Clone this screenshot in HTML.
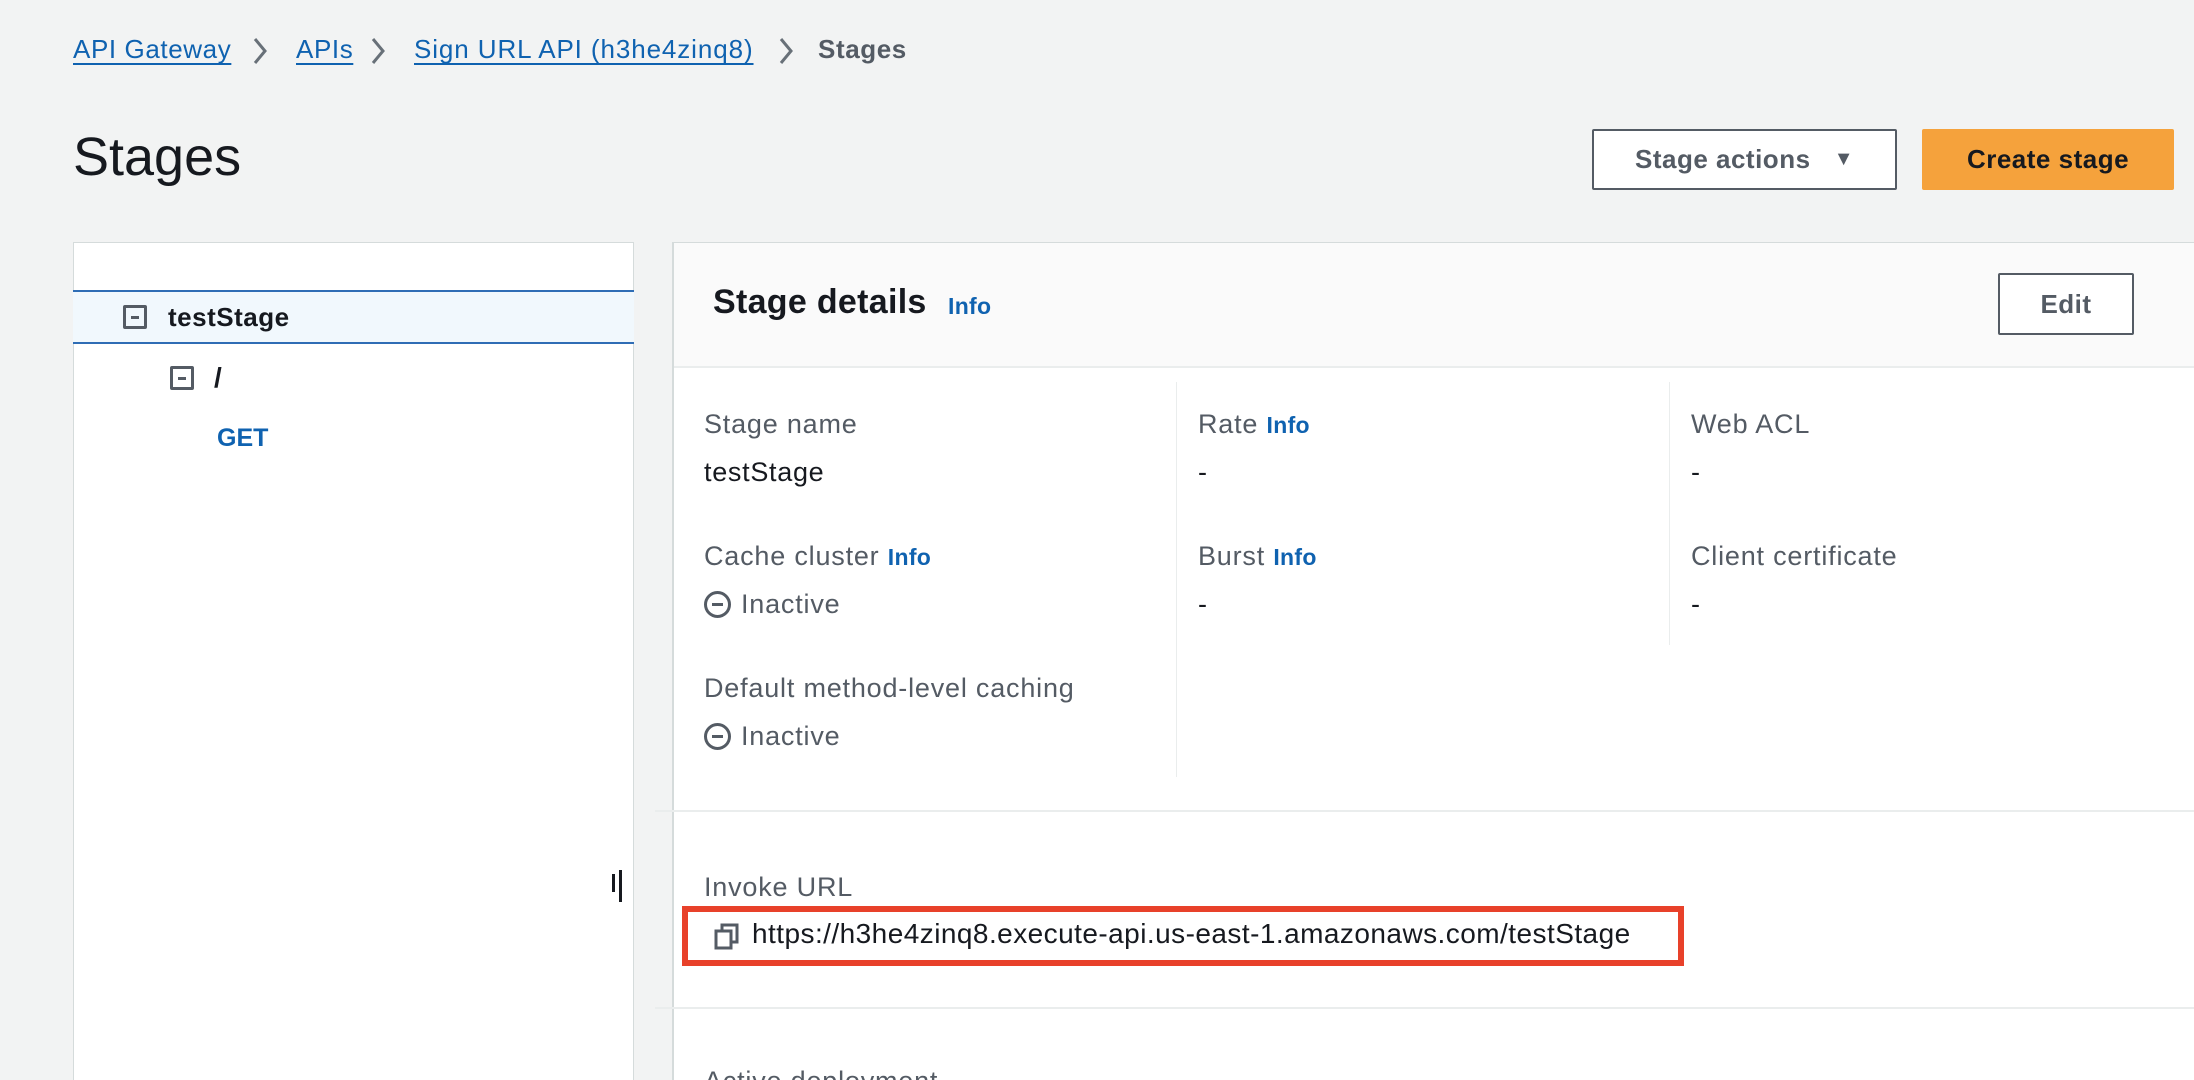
<!DOCTYPE html>
<html><head><meta charset="utf-8"><style>
*{margin:0;padding:0;box-sizing:border-box}
html,body{width:2194px;height:1080px;overflow:hidden}
body{background:#f2f3f3;font-family:"Liberation Sans",sans-serif;color:#16191f}
#w{position:relative;width:2194px;height:1080px;overflow:hidden}
.a{position:absolute;white-space:nowrap}
.bc{font-size:26px;top:34px;letter-spacing:0.6px}
.lnk{color:#0f62b0;text-decoration:underline;text-underline-offset:5px}
.lbl{font-size:27px;color:#545b64;letter-spacing:0.8px}
.val{font-size:27px;color:#16191f;letter-spacing:0.7px}
.info{color:#0f62b0;font-weight:bold;font-size:23px;letter-spacing:0.3px}
.btn{position:absolute;border:2px solid #545b64;background:#fff;font-weight:bold;font-size:26px;color:#545b64;display:flex;align-items:center;justify-content:center;border-radius:2px;letter-spacing:0.5px}
.box{position:absolute;width:24px;height:24px;border:3px solid #545b64;border-radius:2px}
.box:after{content:"";position:absolute;left:5px;top:8px;width:8px;height:3px;background:#545b64}
.circ{display:inline-block;width:27px;height:27px;border:3px solid #545b64;border-radius:50%;position:relative;vertical-align:-5px;margin-right:10px}
.circ:after{content:"";position:absolute;left:5px;top:9px;width:11px;height:3px;background:#545b64}
</style></head><body><div id="w">
<div class="a bc lnk" style="left:73px">API Gateway</div>
<svg class="a" style="left:252px;top:36px" width="16" height="30" viewBox="0 0 16 30"><path d="M3 3 L13 15 L3 27" fill="none" stroke="#687078" stroke-width="3"/></svg>
<div class="a bc lnk" style="left:296px">APIs</div>
<svg class="a" style="left:370px;top:36px" width="16" height="30" viewBox="0 0 16 30"><path d="M3 3 L13 15 L3 27" fill="none" stroke="#687078" stroke-width="3"/></svg>
<div class="a bc lnk" style="left:414px;letter-spacing:0.9px">Sign URL API (h3he4zinq8)</div>
<svg class="a" style="left:778px;top:36px" width="16" height="30" viewBox="0 0 16 30"><path d="M3 3 L13 15 L3 27" fill="none" stroke="#687078" stroke-width="3"/></svg>
<div class="a bc" style="left:818px;color:#545b64;font-weight:bold">Stages</div>

<div class="a" style="left:73px;top:126px;font-size:54px">Stages</div>
<div class="btn" style="left:1592px;top:129px;width:305px;height:61px">Stage actions&nbsp;&nbsp;&nbsp;<span style="font-size:20px">&#9660;</span></div>
<div class="btn" style="left:1922px;top:129px;width:252px;height:61px;background:#f5a23c;border-color:#f5a23c;color:#16191f">Create stage</div>

<div class="a" style="left:73px;top:242px;width:561px;height:860px;background:#fff;border:1px solid #d5dbdb"></div>
<div class="a" style="left:73px;top:290px;width:561px;height:54px;background:#f1f8fd;border-top:2px solid #2f6db5;border-bottom:2px solid #2f6db5"></div>
<div class="box" style="left:123px;top:305px"></div>
<div class="a" style="left:168px;top:302px;font-size:26px;font-weight:bold;letter-spacing:0.5px">testStage</div>
<div class="box" style="left:170px;top:366px"></div>
<div class="a" style="left:214px;top:362px;font-size:28px;font-weight:bold">/</div>
<div class="a" style="left:217px;top:424px;font-size:25px;font-weight:bold;color:#0f62b0">GET</div>
<div class="a" style="left:612px;top:874px;width:3px;height:18px;background:#16191f"></div>
<div class="a" style="left:619px;top:870px;width:3px;height:32px;background:#16191f"></div>

<div class="a" style="left:672px;top:242px;width:1522px;height:860px;background:#fff;border-left:2px solid #d5dbdb;border-top:1px solid #d5dbdb"></div>
<div class="a" style="left:674px;top:243px;width:1520px;height:125px;background:#fafafa;border-bottom:2px solid #eaeded"></div>
<div class="a" style="left:713px;top:283px;font-size:34px;font-weight:bold;letter-spacing:0.3px">Stage details</div>
<div class="a info" style="left:948px;top:293px">Info</div>
<div class="btn" style="left:1998px;top:273px;width:136px;height:62px">Edit</div>

<div class="a" style="left:1176px;top:382px;width:1px;height:395px;background:#eaeded"></div>
<div class="a" style="left:1669px;top:382px;width:1px;height:263px;background:#eaeded"></div>

<div class="a lbl" style="left:704px;top:409px">Stage name</div>
<div class="a val" style="left:704px;top:457px">testStage</div>
<div class="a lbl" style="left:704px;top:541px">Cache cluster <span class="info">Info</span></div>
<div class="a lbl" style="left:704px;top:589px"><span class="circ"></span>Inactive</div>
<div class="a lbl" style="left:704px;top:673px">Default method-level caching</div>
<div class="a lbl" style="left:704px;top:721px"><span class="circ"></span>Inactive</div>

<div class="a lbl" style="left:1198px;top:409px">Rate <span class="info">Info</span></div>
<div class="a val" style="left:1198px;top:457px">-</div>
<div class="a lbl" style="left:1198px;top:541px">Burst <span class="info">Info</span></div>
<div class="a val" style="left:1198px;top:589px">-</div>

<div class="a lbl" style="left:1691px;top:409px">Web ACL</div>
<div class="a val" style="left:1691px;top:457px">-</div>
<div class="a lbl" style="left:1691px;top:541px">Client certificate</div>
<div class="a val" style="left:1691px;top:589px">-</div>

<div class="a" style="left:655px;top:810px;width:1539px;height:2px;background:#eaeded"></div>
<div class="a lbl" style="left:704px;top:872px">Invoke URL</div>
<div class="a" style="left:682px;top:906px;width:1002px;height:60px;border:6px solid #e8412a"></div>
<svg class="a" style="left:713px;top:922px" width="28" height="28" viewBox="0 0 28 28"><rect x="9" y="3" width="15" height="17" fill="none" stroke="#545b64" stroke-width="3"/><rect x="3" y="9" width="15" height="17" fill="#fff" stroke="#545b64" stroke-width="3"/></svg>
<div class="a val" style="left:752px;top:918px;font-size:28px;letter-spacing:0.45px">https://h3he4zinq8.execute-api.us-east-1.amazonaws.com/testStage</div>
<div class="a" style="left:655px;top:1007px;width:1539px;height:2px;background:#eaeded"></div>
<div class="a lbl" style="left:704px;top:1066px">Active deployment</div>
</div></body></html>
